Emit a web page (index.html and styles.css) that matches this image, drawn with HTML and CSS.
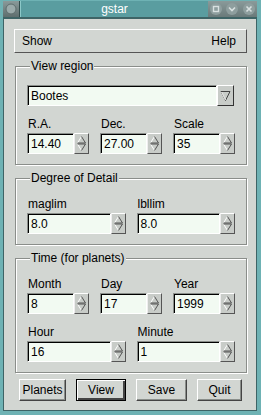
FILE: index.html
```html
<!DOCTYPE html>
<html lang="en">
<head>
    <meta charset="UTF-8">
    <title>gstar</title>
    <link rel="stylesheet" href="styles.css">
</head>
<body>
<div class="window">
    <div class="titlebar">
        <div class="tb-icon">
            <svg width="14" height="14" viewBox="0 0 14 14"><circle cx="7" cy="7" r="5" fill="#9aaaaa" stroke="#5e6e6e"/></svg>
        </div>
        <div class="tb-title">gstar</div>
        <div class="tb-buttons">
            <svg width="14" height="14" viewBox="0 0 14 14"><circle cx="7" cy="7" r="6" fill="#8e9e9e"/><rect x="4.5" y="4.5" width="5" height="5" fill="none" stroke="#d8e0e0" stroke-width="1.4"/></svg>
            <svg width="14" height="14" viewBox="0 0 14 14"><circle cx="7" cy="7" r="6" fill="#8e9e9e"/><path d="M4 5.5 L7 8.5 L10 5.5" fill="none" stroke="#d8e0e0" stroke-width="1.6"/></svg>
            <svg width="14" height="14" viewBox="0 0 14 14"><circle cx="7" cy="7" r="6" fill="#8e9e9e"/><path d="M4.5 4.5 L9.5 9.5 M9.5 4.5 L4.5 9.5" fill="none" stroke="#d8e0e0" stroke-width="1.6"/></svg>
        </div>
    </div>

    <div class="client">
        <div class="menubar">
            <span>Show</span>
            <span>Help</span>
        </div>

        <fieldset class="group">
            <legend>View region</legend>
            <div class="combo">
                <div class="entry">Bootes</div>
                <div class="combo-btn">
                    <svg width="15" height="17" viewBox="0 0 15 17"><path d="M3 4.5 H12 L7.5 13.5 Z" fill="none" stroke="#444" stroke-width="1"/><path d="M3.5 5 L7.5 13" stroke="#fff"/></svg>
                </div>
            </div>
            <div class="fields three">
                <div class="field">
                    <label>R.A.</label>
                    <div class="spin"><div class="entry">14.40</div><div class="spin-btn"><svg width="13" height="19" viewBox="0 0 13 19"><path d="M2.5 9 L6.5 2.5 M2.5 10 L6.5 16.5" stroke="#fff" fill="none"/><path d="M6.5 2.5 L10.5 9 H2.5 M2.5 10 H10.5 L6.5 16.5" stroke="#555" fill="none"/></svg></div></div>
                </div>
                <div class="field">
                    <label>Dec.</label>
                    <div class="spin"><div class="entry">27.00</div><div class="spin-btn"><svg width="13" height="19" viewBox="0 0 13 19"><path d="M2.5 9 L6.5 2.5 M2.5 10 L6.5 16.5" stroke="#fff" fill="none"/><path d="M6.5 2.5 L10.5 9 H2.5 M2.5 10 H10.5 L6.5 16.5" stroke="#555" fill="none"/></svg></div></div>
                </div>
                <div class="field">
                    <label>Scale</label>
                    <div class="spin"><div class="entry">35</div><div class="spin-btn"><svg width="13" height="19" viewBox="0 0 13 19"><path d="M2.5 9 L6.5 2.5 M2.5 10 L6.5 16.5" stroke="#fff" fill="none"/><path d="M6.5 2.5 L10.5 9 H2.5 M2.5 10 H10.5 L6.5 16.5" stroke="#555" fill="none"/></svg></div></div>
                </div>
            </div>
        </fieldset>

        <fieldset class="group">
            <legend>Degree of Detail</legend>
            <div class="fields two">
                <div class="field">
                    <label>maglim</label>
                    <div class="spin"><div class="entry">8.0</div><div class="spin-btn"><svg width="13" height="19" viewBox="0 0 13 19"><path d="M2.5 9 L6.5 2.5 M2.5 10 L6.5 16.5" stroke="#fff" fill="none"/><path d="M6.5 2.5 L10.5 9 H2.5 M2.5 10 H10.5 L6.5 16.5" stroke="#555" fill="none"/></svg></div></div>
                </div>
                <div class="field">
                    <label>lbllim</label>
                    <div class="spin"><div class="entry">8.0</div><div class="spin-btn"><svg width="13" height="19" viewBox="0 0 13 19"><path d="M2.5 9 L6.5 2.5 M2.5 10 L6.5 16.5" stroke="#fff" fill="none"/><path d="M6.5 2.5 L10.5 9 H2.5 M2.5 10 H10.5 L6.5 16.5" stroke="#555" fill="none"/></svg></div></div>
                </div>
            </div>
        </fieldset>

        <fieldset class="group">
            <legend>Time (for planets)</legend>
            <div class="fields three">
                <div class="field">
                    <label>Month</label>
                    <div class="spin"><div class="entry">8</div><div class="spin-btn"><svg width="13" height="19" viewBox="0 0 13 19"><path d="M2.5 9 L6.5 2.5 M2.5 10 L6.5 16.5" stroke="#fff" fill="none"/><path d="M6.5 2.5 L10.5 9 H2.5 M2.5 10 H10.5 L6.5 16.5" stroke="#555" fill="none"/></svg></div></div>
                </div>
                <div class="field">
                    <label>Day</label>
                    <div class="spin"><div class="entry">17</div><div class="spin-btn"><svg width="13" height="19" viewBox="0 0 13 19"><path d="M2.5 9 L6.5 2.5 M2.5 10 L6.5 16.5" stroke="#fff" fill="none"/><path d="M6.5 2.5 L10.5 9 H2.5 M2.5 10 H10.5 L6.5 16.5" stroke="#555" fill="none"/></svg></div></div>
                </div>
                <div class="field">
                    <label>Year</label>
                    <div class="spin"><div class="entry">1999</div><div class="spin-btn"><svg width="13" height="19" viewBox="0 0 13 19"><path d="M2.5 9 L6.5 2.5 M2.5 10 L6.5 16.5" stroke="#fff" fill="none"/><path d="M6.5 2.5 L10.5 9 H2.5 M2.5 10 H10.5 L6.5 16.5" stroke="#555" fill="none"/></svg></div></div>
                </div>
            </div>
            <div class="fields two">
                <div class="field">
                    <label>Hour</label>
                    <div class="spin"><div class="entry">16</div><div class="spin-btn"><svg width="13" height="19" viewBox="0 0 13 19"><path d="M2.5 9 L6.5 2.5 M2.5 10 L6.5 16.5" stroke="#fff" fill="none"/><path d="M6.5 2.5 L10.5 9 H2.5 M2.5 10 H10.5 L6.5 16.5" stroke="#555" fill="none"/></svg></div></div>
                </div>
                <div class="field">
                    <label>Minute</label>
                    <div class="spin"><div class="entry">1</div><div class="spin-btn"><svg width="13" height="19" viewBox="0 0 13 19"><path d="M2.5 9 L6.5 2.5 M2.5 10 L6.5 16.5" stroke="#fff" fill="none"/><path d="M6.5 2.5 L10.5 9 H2.5 M2.5 10 H10.5 L6.5 16.5" stroke="#555" fill="none"/></svg></div></div>
                </div>
            </div>
        </fieldset>

        <div class="actions">
            <button class="btn btn-planets">Planets</button>
            <button class="btn btn-view default">View</button>
            <button class="btn btn-save">Save</button>
            <button class="btn btn-quit">Quit</button>
        </div>
    </div>
</div>
</body>
</html>
```

FILE: styles.css
```css
:root {
    --bg: #d2d6d2;
    --teal: #6eb2b4;
    --title: #5a9da0;
    --entry: #f2faf2;
    --dark: #8a8e8a;
}
* {
    box-sizing: border-box;
}
body {
    margin: 0;
    padding: 0;
    font-family: 'Liberation Sans', Arial, sans-serif;
    font-size: 12px;
    color: #000;
    background: var(--teal);
}
.window {
    width: 261px;
    height: 415px;
    display: flex;
    flex-direction: column;
    padding: 0 4px 4px 3px;
    background: var(--teal);
}

/* title bar */
.titlebar {
    height: 19px;
    display: flex;
    border-bottom: 2px solid #3e6466;
    padding-top: 1px;
}
.tb-icon {
    width: 17px;
    display: flex;
    align-items: center;
    justify-content: center;
    background: linear-gradient(#8a9a9a, #5e6e6e);
    border-right: 1px solid #2e4a4a;
}
.tb-title {
    flex: 1;
    background: var(--title);
    color: #fff;
    text-align: center;
    line-height: 16px;
    border-left: 1px solid #8cc8c8;
}
.tb-buttons {
    width: 49px;
    display: flex;
    align-items: center;
    justify-content: space-around;
    background: linear-gradient(#8a9a9a, #6a7a7a);
}

/* client area */
.client {
    flex: 1;
    background: var(--bg);
    padding: 10px 9px 0 10px;
    border: 1px solid #3e6466;
    border-top: none;
}
.menubar {
    height: 24px;
    display: flex;
    justify-content: space-between;
    align-items: center;
    padding: 0 10px 0 7px;
    border: 1px solid;
    border-color: #fff #555 #555 #fff;
    margin-bottom: 6px;
}

.group {
    margin: 0 0 6px 1px;
    padding: 12px 11px 10px 11px;
    border: 1px solid var(--dark);
    box-shadow: 1px 1px 0 #fff, inset 1px 1px 0 #fff;
    min-width: 0;
}
.group legend {
    padding: 0 1px;
    margin-left: 3px;
    line-height: 14px;
    background: var(--bg);
}

.combo {
    display: flex;
    height: 21px;
    margin-bottom: 11px;
    margin-right: 1px;
}
.combo .entry {
    flex: 1;
}
.combo-btn {
    width: 17px;
    display: flex;
    align-items: center;
    justify-content: center;
    background: #c8ccc8;
    border: 1px solid;
    border-color: #fff #333 #333 #fff;
}

.fields {
    display: grid;
    column-gap: 11px;
}
.fields + .fields {
    margin-top: 11px;
}
.three {
    grid-template-columns: repeat(3, 1fr);
}
.two {
    grid-template-columns: repeat(2, 1fr);
}
.field label {
    display: block;
    line-height: 14px;
    margin-bottom: 2px;
    padding-left: 1px;
}

.entry {
    display: flex;
    align-items: center;
    padding-left: 3px;
    background: var(--entry);
    border: 1px solid;
    border-color: var(--dark) #fff #fff var(--dark);
    box-shadow: inset 1px 1px 0 #000;
    white-space: nowrap;
    overflow: hidden;
}
.spin {
    display: flex;
    height: 21px;
}
.spin .entry {
    flex: 1;
    min-width: 0;
}
.spin-btn {
    width: 15px;
    display: flex;
    align-items: center;
    justify-content: center;
    background: #c8ccc8;
    border: 1px solid;
    border-color: #fff #555 #555 #eee;
}

/* bottom buttons */
.actions {
    display: flex;
    justify-content: space-around;
    margin-top: 0;
}
.btn {
    height: 22px;
    padding: 0;
    font-family: inherit;
    font-size: 12px;
    color: #000;
    background: var(--bg);
    border: 1px solid;
    border-color: #fff #444 #444 #fff;
    box-shadow: inset -1px -1px 0 var(--dark);
}
.btn.default {
    border: 1px solid #000;
    box-shadow: inset 1px 1px 0 #fff, inset -2px -2px 0 #444;
}
.btn-planets {
    width: 47px;
}
.btn-view {
    width: 50px;
}
.btn-save {
    width: 51px;
}
.btn-quit {
    width: 45px;
}
```
